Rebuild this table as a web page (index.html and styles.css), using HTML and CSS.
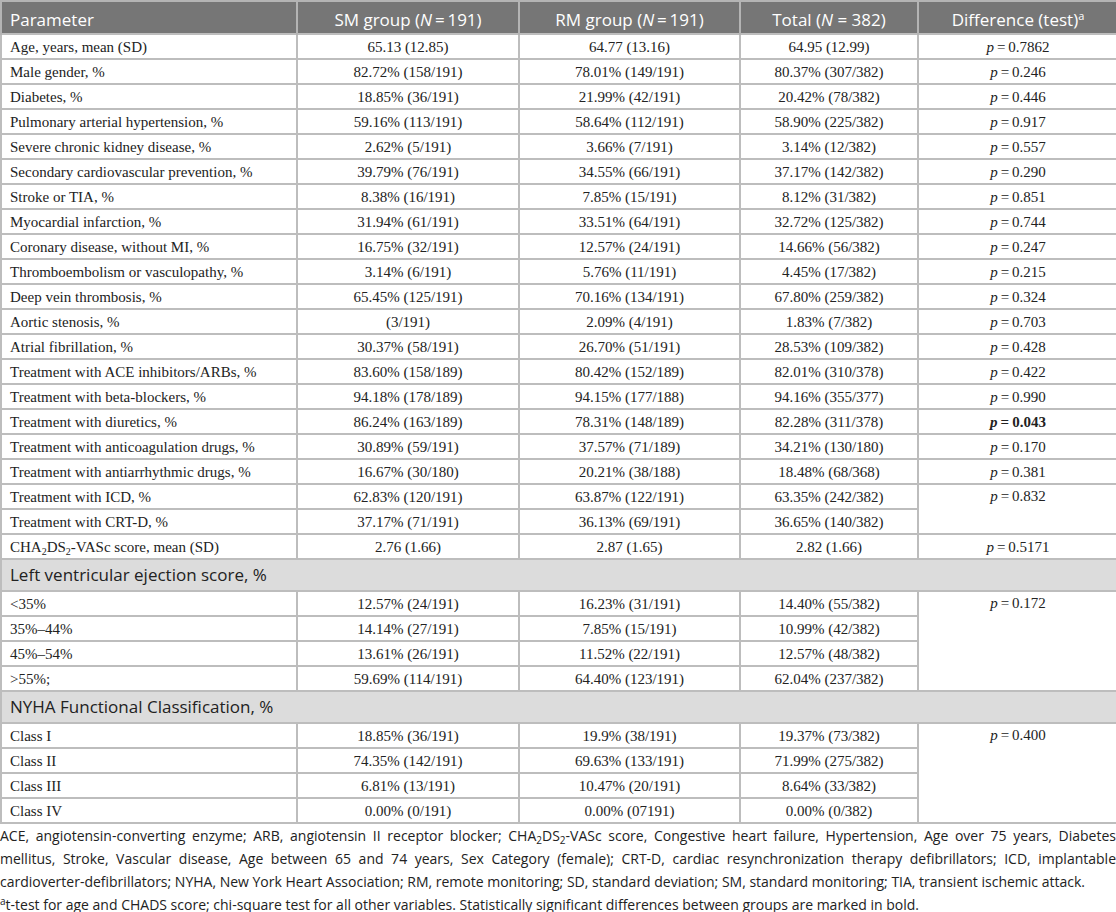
FILE: index.html
```html
<!DOCTYPE html>
<html>
<head>
<meta charset="utf-8">
<link rel="stylesheet" href="styles.css">
</head>
<body>
<div class="page">
<table class="data">
<colgroup>
<col class="c1"><col class="c2"><col class="c3"><col class="c4"><col class="c5">
</colgroup>
<thead>
<tr>
<th class="left">Parameter</th>
<th>SM group (<i>N</i>&#8201;=&#8201;191)</th>
<th>RM group (<i>N</i>&#8201;=&#8201;191)</th>
<th>Total (<i>N</i> = 382)</th>
<th>Difference (test)<sup>a</sup></th>
</tr>
</thead>
<tbody>
<tr><td>Age, years, mean (SD)</td><td>65.13 (12.85)</td><td>64.77 (13.16)</td><td>64.95 (12.99)</td><td><i>p</i>&#8201;=&#8201;0.7862</td></tr>
<tr><td>Male gender, %</td><td>82.72% (158/191)</td><td>78.01% (149/191)</td><td>80.37% (307/382)</td><td><i>p</i>&#8201;=&#8201;0.246</td></tr>
<tr><td>Diabetes, %</td><td>18.85% (36/191)</td><td>21.99% (42/191)</td><td>20.42% (78/382)</td><td><i>p</i>&#8201;=&#8201;0.446</td></tr>
<tr><td>Pulmonary arterial hypertension, %</td><td>59.16% (113/191)</td><td>58.64% (112/191)</td><td>58.90% (225/382)</td><td><i>p</i>&#8201;=&#8201;0.917</td></tr>
<tr><td>Severe chronic kidney disease, %</td><td>2.62% (5/191)</td><td>3.66% (7/191)</td><td>3.14% (12/382)</td><td><i>p</i>&#8201;=&#8201;0.557</td></tr>
<tr><td>Secondary cardiovascular prevention, %</td><td>39.79% (76/191)</td><td>34.55% (66/191)</td><td>37.17% (142/382)</td><td><i>p</i>&#8201;=&#8201;0.290</td></tr>
<tr><td>Stroke or TIA, %</td><td>8.38% (16/191)</td><td>7.85% (15/191)</td><td>8.12% (31/382)</td><td><i>p</i>&#8201;=&#8201;0.851</td></tr>
<tr><td>Myocardial infarction, %</td><td>31.94% (61/191)</td><td>33.51% (64/191)</td><td>32.72% (125/382)</td><td><i>p</i>&#8201;=&#8201;0.744</td></tr>
<tr><td>Coronary disease, without MI, %</td><td>16.75% (32/191)</td><td>12.57% (24/191)</td><td>14.66% (56/382)</td><td><i>p</i>&#8201;=&#8201;0.247</td></tr>
<tr><td>Thromboembolism or vasculopathy, %</td><td>3.14% (6/191)</td><td>5.76% (11/191)</td><td>4.45% (17/382)</td><td><i>p</i>&#8201;=&#8201;0.215</td></tr>
<tr><td>Deep vein thrombosis, %</td><td>65.45% (125/191)</td><td>70.16% (134/191)</td><td>67.80% (259/382)</td><td><i>p</i>&#8201;=&#8201;0.324</td></tr>
<tr><td>Aortic stenosis, %</td><td>(3/191)</td><td>2.09% (4/191)</td><td>1.83% (7/382)</td><td><i>p</i>&#8201;=&#8201;0.703</td></tr>
<tr><td>Atrial fibrillation, %</td><td>30.37% (58/191)</td><td>26.70% (51/191)</td><td>28.53% (109/382)</td><td><i>p</i>&#8201;=&#8201;0.428</td></tr>
<tr><td>Treatment with ACE inhibitors/ARBs, %</td><td>83.60% (158/189)</td><td>80.42% (152/189)</td><td>82.01% (310/378)</td><td><i>p</i>&#8201;=&#8201;0.422</td></tr>
<tr><td>Treatment with beta-blockers, %</td><td>94.18% (178/189)</td><td>94.15% (177/188)</td><td>94.16% (355/377)</td><td><i>p</i>&#8201;=&#8201;0.990</td></tr>
<tr><td>Treatment with diuretics, %</td><td>86.24% (163/189)</td><td>78.31% (148/189)</td><td>82.28% (311/378)</td><td><b><i>p</i>&#8201;=&#8201;0.043</b></td></tr>
<tr><td>Treatment with anticoagulation drugs, %</td><td>30.89% (59/191)</td><td>37.57% (71/189)</td><td>34.21% (130/180)</td><td><i>p</i>&#8201;=&#8201;0.170</td></tr>
<tr><td>Treatment with antiarrhythmic drugs, %</td><td>16.67% (30/180)</td><td>20.21% (38/188)</td><td>18.48% (68/368)</td><td><i>p</i>&#8201;=&#8201;0.381</td></tr>
<tr><td>Treatment with ICD, %</td><td>62.83% (120/191)</td><td>63.87% (122/191)</td><td>63.35% (242/382)</td><td class="top" rowspan="2"><i>p</i>&#8201;=&#8201;0.832</td></tr>
<tr><td>Treatment with CRT-D, %</td><td>37.17% (71/191)</td><td>36.13% (69/191)</td><td>36.65% (140/382)</td></tr>
<tr><td>CHA<sub>2</sub>DS<sub>2</sub>-VASc score, mean (SD)</td><td>2.76 (1.66)</td><td>2.87 (1.65)</td><td>2.82 (1.66)</td><td><i>p</i>&#8201;=&#8201;0.5171</td></tr>
<tr class="section"><td colspan="5">Left ventricular ejection score, %</td></tr>
<tr><td>&lt;35%</td><td>12.57% (24/191)</td><td>16.23% (31/191)</td><td>14.40% (55/382)</td><td class="top" rowspan="4"><i>p</i>&#8201;=&#8201;0.172</td></tr>
<tr><td>35%–44%</td><td>14.14% (27/191)</td><td>7.85% (15/191)</td><td>10.99% (42/382)</td></tr>
<tr><td>45%–54%</td><td>13.61% (26/191)</td><td>11.52% (22/191)</td><td>12.57% (48/382)</td></tr>
<tr><td>&gt;55%;</td><td>59.69% (114/191)</td><td>64.40% (123/191)</td><td>62.04% (237/382)</td></tr>
<tr class="section"><td colspan="5">NYHA Functional Classification, %</td></tr>
<tr><td>Class I</td><td>18.85% (36/191)</td><td>19.9% (38/191)</td><td>19.37% (73/382)</td><td class="top" rowspan="4"><i>p</i>&#8201;=&#8201;0.400</td></tr>
<tr><td>Class II</td><td>74.35% (142/191)</td><td>69.63% (133/191)</td><td>71.99% (275/382)</td></tr>
<tr><td>Class III</td><td>6.81% (13/191)</td><td>10.47% (20/191)</td><td>8.64% (33/382)</td></tr>
<tr><td>Class IV</td><td>0.00% (0/191)</td><td>0.00% (07191)</td><td>0.00% (0/382)</td></tr>
</tbody>
</table>
<div class="notes">
<p>ACE, angiotensin-converting enzyme; ARB, angiotensin II receptor blocker; CHA<sub>2</sub>DS<sub>2</sub>-VASc score, Congestive heart failure, Hypertension, Age over 75 years, Diabetes mellitus, Stroke, Vascular disease, Age between 65 and 74 years, Sex Category (female); CRT-D, cardiac resynchronization therapy defibrillators; ICD, implantable cardioverter-defibrillators; NYHA, New York Heart Association; RM, remote monitoring; SD, standard deviation; SM, standard monitoring; TIA, transient ischemic attack.</p>
<p><sup>a</sup>t-test for age and CHADS score; chi-square test for all other variables. Statistically significant differences between groups are marked in bold.</p>
</div>
</div>
</body>
</html>
```
FILE: styles.css
```css
html, body {
  margin: 0;
  padding: 0;
  background: #ffffff;
}
.page {
  width: 1116px;
  overflow: hidden;
}
.data {
  width: 1116px;
  table-layout: fixed;
  border-collapse: collapse;
  font-family: "Liberation Serif", "Times New Roman", serif;
  font-size: 15px;
  color: #222;
}
.c1 { width: 296px; }
.c2 { width: 222px; }
.c3 { width: 221px; }
.c4 { width: 178px; }
.c5 { width: 199px; }
.data th {
  background: #767676;
  color: #fff;
  font-family: "Open Sans", "Liberation Sans", sans-serif;
  font-weight: normal;
  font-size: 17px;
  height: 33px;
  padding: 4px 0 0 0;
  text-align: center;
  border: 2px solid #b4b4b4;
  border-bottom: none;
  box-sizing: border-box;
  line-height: 24px;
}
.data th.left {
  text-align: left;
  padding-left: 8px;
}
.data th sup {
  font-size: 11px;
  line-height: 0;
  vertical-align: 6px;
}
.data td {
  height: 25px;
  box-sizing: border-box;
  padding: 0 8px;
  text-align: center;
  border: 2px solid #bdbdbd;
  line-height: 20px;
  vertical-align: middle;
}
.data td:first-child {
  text-align: left;
}
.data td:last-child, .data th:last-child {
  border-right: none;
}
.data td.top {
  vertical-align: top;
  padding-top: 1px;
}
.data sub {
  font-size: 10px;
  line-height: 0;
  vertical-align: -3px;
}
.data tr.section td {
  background: #dcdcdc;
  font-family: "Open Sans", "Liberation Sans", sans-serif;
  font-size: 17px;
  height: 32px;
  text-align: left;
}
.notes {
  font-family: "Open Sans", "Liberation Sans", sans-serif;
  font-size: 14px;
  line-height: 23px;
  color: #222;
  text-align: justify;
  padding-top: 0;
}
.notes p {
  margin: 0;
}
.notes sub {
  font-size: 10px;
  line-height: 0;
  vertical-align: -3px;
}
.notes sup {
  font-size: 10px;
  line-height: 0;
  vertical-align: 5px;
}
```
